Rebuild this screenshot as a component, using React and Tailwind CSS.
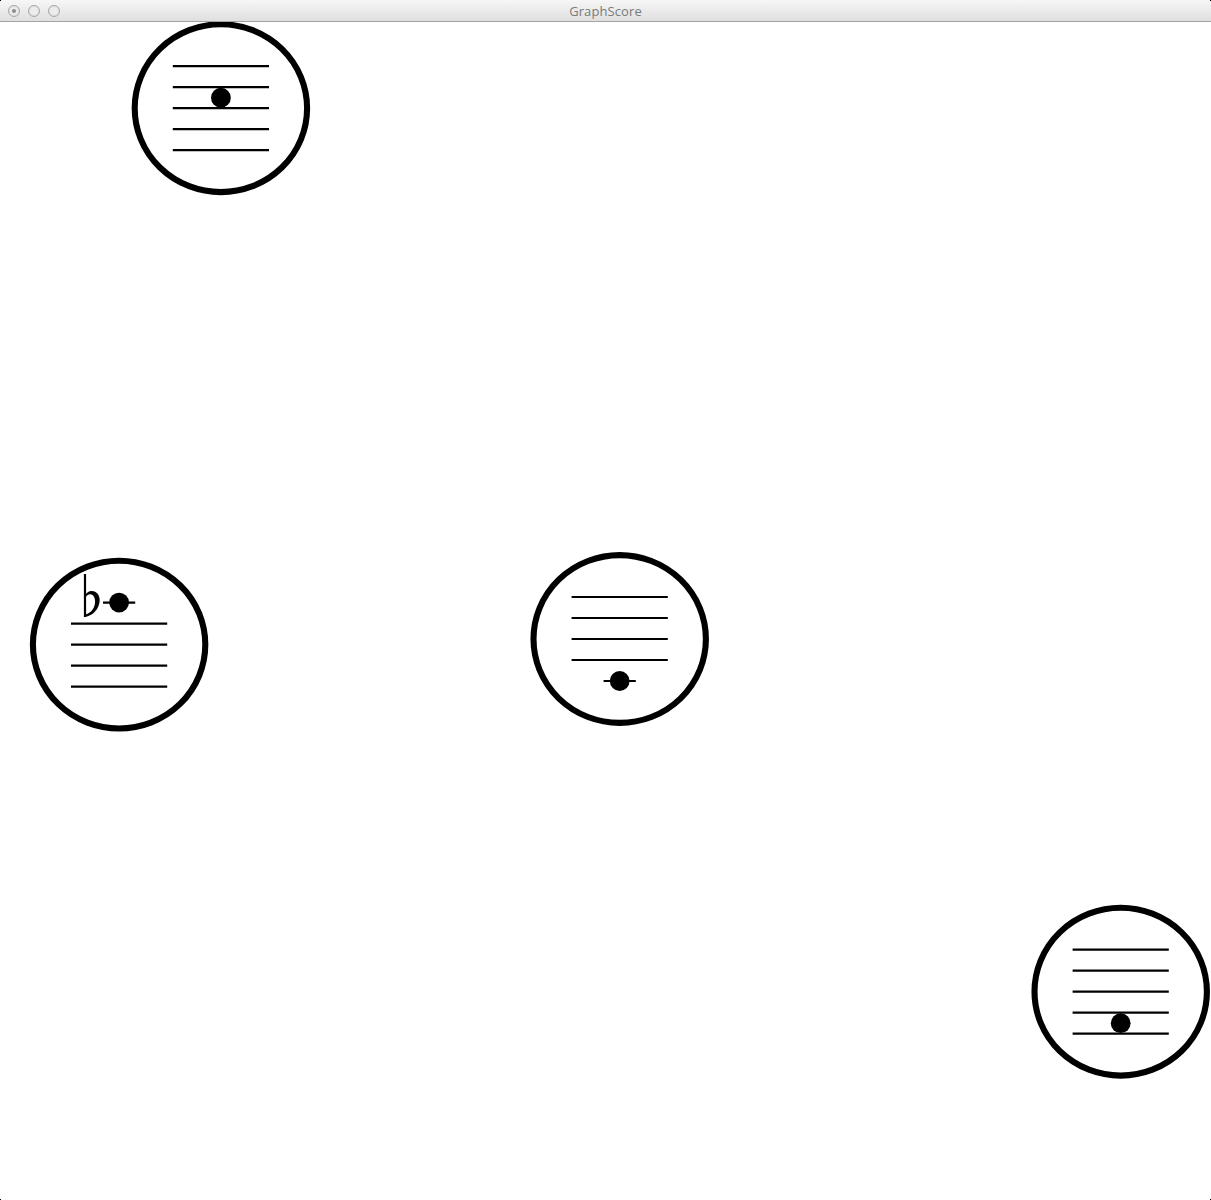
const nodes = [
  { id: "b", cx: 220.9, cy: 108.2, lines: [-2, -1, 0, 1, 2], note: -0.5 },
  { id: "a-flat", cx: 119.1, cy: 644.6, lines: [-1, 0, 1, 2], note: -2, ledger: true, flat: true },
  { id: "e", cx: 619.7, cy: 639, lines: [-2, -1, 0, 1], note: 2, ledger: true },
  { id: "f", cx: 1120.7, cy: 991.7, lines: [-2, -1, 0, 1, 2], note: 1.5 },
];

const GAP = 21;

function Flat() {
  return (
    <g>
      <rect x="-35.2" y="-70.6" width="2.2" height="43" />
      <path
        d="M-33.8 -49.8 C-32 -52.6 -29.8 -53.9 -27.3 -53.7 C-22.3 -53.4 -19.3 -49.5 -19.4 -44.4 C-19.7 -36 -26 -28.8 -34.2 -27.6 L-33.6 -30.2 C-27.4 -31.8 -24 -37.5 -24 -43.2 C-24 -47.6 -26.2 -50.4 -29 -50.4 C-31 -50.4 -32.6 -49.2 -33.8 -46.6 Z"
      />
    </g>
  );
}

function ScoreNode({ cx, cy, lines, note, ledger, flat }) {
  return (
    <g transform={`translate(${cx} ${cy})`}>
      <ellipse rx="86.2" ry="83.9" fill="white" stroke="black" strokeWidth="6.1" />
      {lines.map((n) => (
        <line key={n} x1="-48.1" x2="48.1" y1={n * GAP} y2={n * GAP} stroke="black" strokeWidth="2.2" />
      ))}
      {ledger && <line x1="-16.1" x2="16.1" y1={note * GAP} y2={note * GAP} stroke="black" strokeWidth="2.2" />}
      <circle cy={note * GAP} r="9.9" />
      {flat && <Flat />}
    </g>
  );
}

function WindowButton({ dot }) {
  return (
    <span className="flex size-3 items-center justify-center rounded-full border-[1.5px] border-[#a9a9a9] bg-[#ededed] shadow-[inset_0_0_1px_#a9a9a9]">
      {dot && <span className="size-1 rounded-full bg-[#8b8b8b]" />}
    </span>
  );
}

export default function App() {
  return (
    <div className="relative flex h-[1200px] w-[1211px] flex-col overflow-hidden bg-white">
      <header className="grid h-[22px] shrink-0 grid-cols-[1fr_auto_1fr] items-center border-b border-[#a3a3a3] bg-linear-to-b from-[#f7f7f7] to-[#dfdfdf]">
        <div className="flex gap-2 pl-2 pt-px">
          <WindowButton dot />
          <WindowButton />
          <WindowButton />
        </div>
        <h1 className="pt-px font-['Open_Sans','Noto_Sans',sans-serif] text-[13px] leading-5 tracking-[0.1px] text-[#7a7a7a]">GraphScore</h1>
      </header>
      <main className="min-h-0 flex-1">
        <svg className="block h-full w-full" viewBox="0 22 1211 1178" aria-label="Score graph">
          {nodes.map((node) => (
            <ScoreNode key={node.id} {...node} />
          ))}
        </svg>
      </main>
      <i className="absolute left-0 top-0 size-px bg-black" />
      <i className="absolute right-0 top-0 size-px bg-black" />
      <i className="absolute bottom-0 left-0 size-px bg-black" />
      <i className="absolute bottom-0 right-0 size-px bg-black" />
    </div>
  );
}
